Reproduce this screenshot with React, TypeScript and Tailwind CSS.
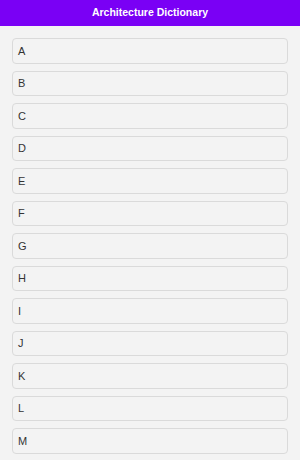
import React from 'react';

const LETRAS = 'ABCDEFGHIJKLMNOPQRSTUVWXYZ'.split('');

export default function App() {
  return (
    <div
      className="h-[460px] w-[300px] overflow-y-auto bg-[#f3f3f3] [&::-webkit-scrollbar]:w-[4px] [&::-webkit-scrollbar]:bg-[#e2e2e2] [&::-webkit-scrollbar-track]:mt-[26px] [&::-webkit-scrollbar-track]:bg-[#f3f3f3] [&::-webkit-scrollbar-thumb]:bg-[#c9c9c9]"
      style={{ fontFamily: '"Liberation Sans", Arial, sans-serif' }}
    >
      {/* Cabecera */}
      <header className="sticky top-0 z-10 flex h-[26px] items-center justify-center bg-[#7a00f5]">
        <h1 className="text-[10.5px] font-bold text-white">Architecture Dictionary</h1>
      </header>

      {/* Lista de letras */}
      <ul className="flex flex-col gap-[7px] px-3 pt-3 pb-[140px]">
        {LETRAS.map((letra) => (
          <li
            key={letra}
            className="flex h-[25.5px] items-center rounded-[4px] border border-[#dadada] bg-[#f3f3f3] px-[5px] text-[11px] text-[#333]"
          >
            {letra}
          </li>
        ))}
      </ul>
    </div>
  );
}
